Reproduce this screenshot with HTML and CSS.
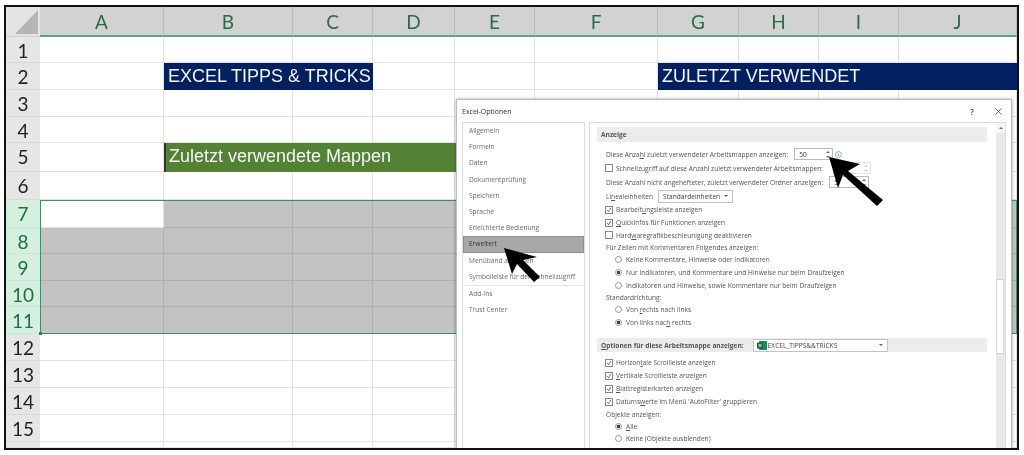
FILE: index.html
```html
<!DOCTYPE html>
<html lang="de">
<head>
<meta charset="utf-8">
<title>Excel-Optionen</title>
<link rel="stylesheet" href="styles.css">
</head>
<body>
<div class="frame">
  <div class="sheet">
    <div class="corner"><svg class="corner-tri" viewBox="0 0 34 29"><polygon points="9,27 32,3 32,27"/></svg></div>
    <div class="col">A</div><div class="col">B</div><div class="col">C</div><div class="col">D</div><div class="col">E</div><div class="col">F</div><div class="col">G</div><div class="col">H</div><div class="col">I</div><div class="col">J</div>

    <div class="num">1</div><i></i><i></i><i></i><i></i><i></i><i></i><i></i><i></i><i></i><i></i>
    <div class="num">2</div><i></i><div class="banner navy span2">EXCEL TIPPS &amp; TRICKS</div><i></i><i></i><i></i><div class="banner navy span4">ZULETZT VERWENDET</div>
    <div class="num">3</div><i></i><i></i><i></i><i></i><i></i><i></i><i></i><i></i><i></i><i></i>
    <div class="num">4</div><i></i><i></i><i></i><i></i><i></i><i></i><i></i><i></i><i></i><i></i>
    <div class="num">5</div><i></i><div class="banner green span4">Zuletzt verwendete Mappen</div><i></i><i></i><i></i><i></i><i></i>
    <div class="num">6</div><i></i><i></i><i></i><i></i><i></i><i></i><i></i><i></i><i></i><i></i>
    <div class="num on">7</div><i></i><i class="s"></i><i class="s"></i><i class="s"></i><i class="s"></i><i class="s"></i><i class="s"></i><i class="s"></i><i class="s"></i><i class="s"></i>
    <div class="num on">8</div><i class="s"></i><i class="s"></i><i class="s"></i><i class="s"></i><i class="s"></i><i class="s"></i><i class="s"></i><i class="s"></i><i class="s"></i><i class="s"></i>
    <div class="num on">9</div><i class="s"></i><i class="s"></i><i class="s"></i><i class="s"></i><i class="s"></i><i class="s"></i><i class="s"></i><i class="s"></i><i class="s"></i><i class="s"></i>
    <div class="num on">10</div><i class="s"></i><i class="s"></i><i class="s"></i><i class="s"></i><i class="s"></i><i class="s"></i><i class="s"></i><i class="s"></i><i class="s"></i><i class="s"></i>
    <div class="num on">11</div><i class="s"></i><i class="s"></i><i class="s"></i><i class="s"></i><i class="s"></i><i class="s"></i><i class="s"></i><i class="s"></i><i class="s"></i><i class="s"></i>
    <div class="num">12</div><i></i><i></i><i></i><i></i><i></i><i></i><i></i><i></i><i></i><i></i>
    <div class="num">13</div><i></i><i></i><i></i><i></i><i></i><i></i><i></i><i></i><i></i><i></i>
    <div class="num">14</div><i></i><i></i><i></i><i></i><i></i><i></i><i></i><i></i><i></i><i></i>
    <div class="num">15</div><i></i><i></i><i></i><i></i><i></i><i></i><i></i><i></i><i></i><i></i>
    <div class="num"></div><i></i><i></i><i></i><i></i><i></i><i></i><i></i><i></i><i></i><i></i>
    <div class="selection"></div>
  </div>

  <section class="dialog">
    <header class="titlebar">
      <span class="title">Excel-Optionen</span>
      <span class="help">?</span>
      <svg class="close" viewBox="0 0 8 8"><path d="M.5.5l7 7M7.5.5l-7 7"/></svg>
    </header>
    <div class="dialog-body">
      <nav class="nav">
        <div class="nav-item">Allgemein</div>
        <div class="nav-item">Formeln</div>
        <div class="nav-item">Daten</div>
        <div class="nav-item">Dokumentprüfung</div>
        <div class="nav-item">Speichern</div>
        <div class="nav-item">Sprache</div>
        <div class="nav-item">Erleichterte Bedienung</div>
        <div class="nav-item active">Erweitert</div>
        <div class="nav-item">Menüband anpassen</div>
        <div class="nav-item">Symbolleiste für den Schnellzugriff</div>
        <div class="nav-sep"></div>
        <div class="nav-item">Add-Ins</div>
        <div class="nav-item">Trust Center</div>
      </nav>
      <div class="panel">
        <div class="options">
          <div class="section">Anzeige</div>
          <div class="row first r14"><span>Diese Anza<u>h</u>l zuletzt verwendeter Arbeitsmappen anzeigen:</span>
            <span class="spin"><span class="spin-val">50</span><span class="arrows"><b class="up"></b><b class="down"></b></span></span>
            <svg class="info" viewBox="0 0 8 8"><circle cx="4" cy="4" r="3.4"/><path d="M4 3.4v2.6M4 1.8v.9"/></svg>
          </div>
          <div class="row r14"><span class="cb"></span><span>Schnellzugriff auf diese Anzahl zuletzt verwendeter Arbeitsmappen:</span>
            <span class="spin off w38"><span class="spin-val"></span><span class="arrows"><b class="up"></b><b class="down"></b></span></span>
          </div>
          <div class="row r14"><span>Diese Anzahl nicht angehefteter, zuletzt verwendeter Ordner anzeigen:</span>
            <span class="spin w40"><span class="spin-val">5</span><span class="arrows"><b class="up"></b><b class="down"></b></span></span>
          </div>
          <div class="row r14"><span>Li<u>n</u>ealeinheiten</span>
            <span class="combo w75"><span class="combo-text">Standardeinheiten</span><b class="down"></b></span>
          </div>
          <div class="row r13"><span class="cb on"><svg viewBox="0 0 8 8"><path d="M1.5 4.2l1.8 2L6.6 1.4"/></svg></span><span>Bearbeit<u>u</u>ngsleiste anzeigen</span></div>
          <div class="row r13"><span class="cb on"><svg viewBox="0 0 8 8"><path d="M1.5 4.2l1.8 2L6.6 1.4"/></svg></span><span><u>Q</u>uickInfos für Funktionen anzeigen</span></div>
          <div class="row r12"><span class="cb"></span><span>Hard<u>w</u>aregrafikbeschleunigung deaktivieren</span></div>
          <div class="row r12">Für Zellen mit Kommentaren Folgendes anzeigen:</div>
          <div class="row r13 in"><span class="rb"></span><span>Keine Kommentare, Hinweise oder Indikatoren</span></div>
          <div class="row r13 in"><span class="rb on"></span><span>Nur Indikatoren, und Kommentare und Hinweise nur beim Draufzeigen</span></div>
          <div class="row r12 in"><span class="rb"></span><span>Indikatoren und Hinweise, sowie Kommentare nur beim Draufzeigen</span></div>
          <div class="row r12">Standardrichtung:</div>
          <div class="row r13 in"><span class="rb"></span><span>Von <u>r</u>echts nach links</span></div>
          <div class="row r13 in"><span class="rb on"></span><span>Von links nac<u>h</u> rechts</span></div>
          <div class="section mid"><span><u>O</u>ptionen für diese Arbeitsmappe anzeigen:</span>
            <span class="combo w135"><svg class="xl" viewBox="0 0 10 9"><rect x="2" width="8" height="9" rx="1" fill="#1e8a55"/><rect y="1.5" width="6" height="6" fill="#0f6b3c"/><path d="M1.5 3l3 3M4.5 3l-3 3" stroke="#fff" stroke-width=".9"/></svg><span class="combo-text">EXCEL_TIPPS&amp;&amp;TRICKS</span><b class="down"></b></span>
          </div>
          <div class="row r13 after"><span class="cb on"><svg viewBox="0 0 8 8"><path d="M1.5 4.2l1.8 2L6.6 1.4"/></svg></span><span>Horizon<u>t</u>ale Scrollleiste anzeigen</span></div>
          <div class="row r13"><span class="cb on"><svg viewBox="0 0 8 8"><path d="M1.5 4.2l1.8 2L6.6 1.4"/></svg></span><span><u>V</u>ertikale Scrollleiste anzeigen</span></div>
          <div class="row r13"><span class="cb on"><svg viewBox="0 0 8 8"><path d="M1.5 4.2l1.8 2L6.6 1.4"/></svg></span><span><u>B</u>lattregisterkarten anzeigen</span></div>
          <div class="row r13"><span class="cb on"><svg viewBox="0 0 8 8"><path d="M1.5 4.2l1.8 2L6.6 1.4"/></svg></span><span>Datums<u>w</u>erte im Menü 'AutoFilter' gruppieren</span></div>
          <div class="row r12">Objekte anzeigen:</div>
          <div class="row r12 in"><span class="rb on"></span><span><u>A</u>lle</span></div>
          <div class="row r13 in"><span class="rb"></span><span>Keine (Objekte ausblenden)</span></div>
        </div>
        <div class="scrollbar">
          <div class="scroll-btn"><b class="up"></b></div>
          <div class="thumb"></div>
        </div>
      </div>
    </div>
  </section>

  <svg class="arrow arrow-nav" viewBox="0 0 44 42"><polygon points="4,4 37,13 23,16 40,33 34,38 17,20 12,30"/></svg>
  <svg class="arrow arrow-spin" viewBox="0 0 62 56"><polygon points="4,4 35,11 23,18 58,47 52,53 18,22 13,35"/></svg>
</div>
</body>
</html>
```
FILE: styles.css
```css
* { box-sizing: border-box; }
html, body { margin: 0; height: 100%; background: #fff; }
body { padding: 5px 5px 5px 4px; overflow: hidden; }

.frame {
  position: relative;
  width: 1015px;
  height: 445px;
  border: 2px solid #111;
  overflow: hidden;
  filter: blur(.35px);
}

/* worksheet */
.sheet {
  position: relative;
  display: grid;
  grid-template-columns: 34px 124px 129px 80px 82px 80px 123px 81px 80px 80px 118px;
  grid-template-rows: 30px 26px 27px 27px 26px 29px 28px 28px 26px 27px 26px 27px 27px 27px 27px 27px 6px;
  background: #fff;
}
.sheet i {
  display: block;
  border-right: 1px solid #e2e2e2;
  border-bottom: 1px solid #e2e2e2;
}
.sheet i.s { background: #c3c3c3; border-color: #b0b0b0; }
.corner { background: #e4e4e4; border-bottom: 1px solid #d0d0d0; }
.corner-tri { display: block; width: 34px; height: 29px; }
.corner-tri polygon { fill: #b5b5b5; }
.col {
  background: #d2d2d2;
  border-right: 1px solid #bcbcbc;
  border-bottom: 2px solid #5fa27d;
  color: #2a6b48;
  font: 19px/29px Lato, sans-serif;
  text-align: center;
}
.num {
  background: #e6e6e6;
  border-bottom: 1px solid #d8d8d8;
  color: #222;
  font: 19px/27px Lato, sans-serif;
  text-align: center;
}
.num.on { background: #d5f0e0; color: #1f6e46; border-color: #cce6d7; }
.banner {
  color: #f4f6fa;
  font: 18px/26px "Liberation Sans", sans-serif;
  padding-left: 4px;
  white-space: nowrap;
}
.navy { background: #002060; }
.green { background: #548235; border-left: 2px solid #333; padding-left: 3px; }
.span2 { grid-column: span 2; }
.span4 { grid-column: span 4; }
.selection {
  position: absolute;
  grid-area: 8 / 2 / 13 / 12;
  inset: 0;
  border: 1px solid #3f8f63;
  z-index: 1;
}
.selection::after {
  content: "";
  position: absolute;
  left: -2px;
  bottom: -2px;
  width: 3px;
  height: 3px;
  background: #2f7f54;
}

/* dialog */
.dialog {
  position: absolute;
  left: 450px;
  top: 92px;
  bottom: 0;
  width: 556px;
  display: flex;
  flex-direction: column;
  padding: 0 5px;
  background: #fff;
  border: 1px solid #bcbcbc;
  border-bottom: 0;
  box-shadow: 0 0 3px rgba(0,0,0,.35);
  font-family: "Open Sans", sans-serif;
  font-size: 6.6px;
  color: #555;
  z-index: 2;
}
.titlebar {
  flex: none;
  height: 22px;
  display: flex;
  align-items: center;
  color: #333;
  font-size: 7px;
}
.title { flex: 1; }
.help { font-size: 8px; font-weight: 600; color: #444; margin-right: 21px; }
.close { width: 7px; height: 7px; margin-right: 4px; fill: none; stroke: #555; stroke-width: .9; }
.dialog-body { flex: 1; min-height: 0; display: flex; gap: 4px; }

.nav {
  width: 123px;
  border: 1px solid #dcdcdc;
  border-bottom: 0;
  color: #6c6c6c;
}
.nav-item {
  height: 16.2px;
  line-height: 16px;
  padding-left: 6px;
  white-space: nowrap;
}
.nav-item.active {
  background: #a8a8a8;
  border: 1px solid #8f8f8f;
  line-height: 13px;
  color: #333;
  padding-left: 5px;
}
.nav-sep { height: 1px; margin: 0 1px; background: #e4e4e4; }

.panel {
  flex: 1;
  min-width: 0;
  display: flex;
  border: 1px solid #dcdcdc;
  border-bottom: 0;
}
.options {
  flex: 1;
  min-width: 0;
  padding: 4px 9px 0 7px;
  white-space: nowrap;
}
.section {
  height: 15px;
  line-height: 15px;
  padding-left: 4px;
  background: #ececec;
  font-weight: 700;
  color: #555;
}
.section.mid {
  display: flex;
  align-items: center;
  gap: 5px;
  height: 14px;
  margin-top: 9px;
}
.section.mid .combo { font-weight: 400; margin-left: 4px; }
.row {
  display: flex;
  align-items: center;
  padding-left: 9px;
}
.row.first { margin-top: 5px; }
.row.after { margin-top: 4px; }
.r12 { height: 12px; }
.r13 { height: 13px; }
.r14 { height: 14px; }
.row.in { padding-left: 18px; }
u { text-underline-offset: 1px; text-decoration-thickness: .5px; }

.cb {
  flex: none;
  width: 8px;
  height: 8px;
  margin-right: 3px;
  margin-left: -1px;
  border: 1px solid #888;
  background: #fff;
}
.cb svg { display: block; width: 6px; height: 6px; fill: none; stroke: #333; stroke-width: 1; }
.rb {
  flex: none;
  width: 7px;
  height: 7px;
  margin-right: 4px;
  border: 1px solid #999;
  border-radius: 50%;
  background: #fff;
}
.rb.on { background: radial-gradient(circle, #444 0 1.6px, #fff 2.1px); }

.spin {
  flex: none;
  display: flex;
  align-items: center;
  width: 39px;
  height: 12px;
  margin-left: 6px;
  border: 1px solid #bbb;
  background: #fff;
  color: #444;
}
.spin.w38 { width: 38px; margin-left: 10px; }
.spin.w40 { width: 40px; margin-left: 6px; }
.spin.off { border-color: #e4e4e4; }
.spin.off b { opacity: .35; }
.spin-val { flex: 1; padding-left: 4px; }
.arrows { display: flex; flex-direction: column; gap: 3px; width: 8px; align-items: center; }
.up, .down { display: block; width: 0; height: 0; border-left: 2px solid transparent; border-right: 2px solid transparent; }
.up { border-bottom: 2px solid #666; }
.down { border-top: 2px solid #666; }
.info { flex: none; width: 7px; height: 7px; margin-left: 2px; fill: none; stroke: #5b95d6; stroke-width: .8; }

.combo {
  flex: none;
  display: flex;
  align-items: center;
  height: 13px;
  margin-left: 5px;
  padding: 0 4px;
  border: 1px solid #c4c4c4;
  background: #fff;
  color: #444;
}
.w75 { width: 75px; }
.w135 { width: 135px; }
.combo-text { flex: 1; }
.xl { flex: none; width: 10px; height: 9px; margin-right: 1px; margin-left: -1px; }

.scrollbar {
  flex: none;
  width: 9px;
  background: #e8e8e8;
}
.scroll-btn {
  height: 10px;
  background: #f4f4f4;
  display: flex;
  align-items: center;
  justify-content: center;
}
.thumb {
  width: 8px;
  height: 75px;
  margin-top: 146px;
  background: #fff;
  border: 1px solid #d6d6d6;
}

/* pointer arrows */
.arrow { position: absolute; z-index: 3; fill: #000; }
.arrow-nav { left: 494px; top: 237px; width: 44px; height: 42px; }
.arrow-spin { left: 819px; top: 146px; width: 62px; height: 56px; }
```
